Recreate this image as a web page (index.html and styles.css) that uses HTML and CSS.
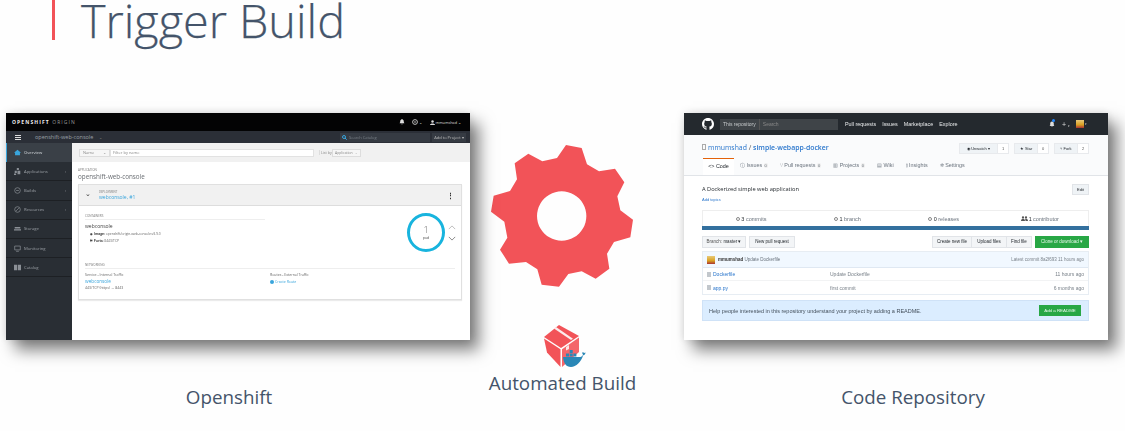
FILE: index.html
```html
<!DOCTYPE html>
<html lang="en">
<head>
<meta charset="utf-8">
<title>Trigger Build</title>
<link rel="stylesheet" href="styles.css">
</head>
<body>
<main class="slide">
  <header class="head">
    <span class="head-bar"></span>
    <h1 class="title">Trigger Build</h1>
  </header>
  <div class="stage">
    <figure class="col col-os">
      <div class="shot os">
        <div class="os-top">
          <span class="os-brand"><b>OPENSHIFT</b> ORIGIN</span>
          <span class="os-top-right">
            <svg class="ic6" viewBox="0 0 10 10"><path fill="#ddd" d="M5 0a1 1 0 0 1 1 1c2 .6 2 3 2 4l1 2H1l1-2c0-1 0-3.400 2-4a1 1 0 0 1 1-1zM4 8h2a1 1 0 0 1-2 0z"/></svg>
            <svg class="ic6 os-help" viewBox="0 0 10 10"><circle cx="5" cy="5" r="4" fill="none" stroke="#ddd" stroke-width="1.400"/><circle cx="5" cy="5" r="1.300" fill="#ddd"/></svg><span class="os-caret">⌄</span>
            <svg class="ic5" viewBox="0 0 10 10"><circle cx="5" cy="3" r="2.500" fill="#ddd"/><path fill="#ddd" d="M0 10c0-4 10-4 10 0z"/></svg>
            <span class="os-user">mmumshad</span><span class="os-caret">⌄</span>
          </span>
        </div>
        <div class="os-nav">
          <span class="os-burger"><i></i><i></i><i></i></span>
          <span class="os-project">openshift-web-console</span><span class="os-project-caret">⌄</span>
          <span class="os-search">
            <svg class="ic5" viewBox="0 0 10 10"><circle cx="4" cy="4" r="3" fill="none" stroke="#39a5dc" stroke-width="2"/><path d="M6 6l3.500 3.500" stroke="#39a5dc" stroke-width="2"/></svg>
            Search Catalog
          </span>
          <span class="os-add">Add to Project ▾</span>
        </div>
        <div class="os-body">
          <nav class="os-side">
            <a class="os-item active"><svg class="ic7" viewBox="0 0 10 10"><path fill="#39a5dc" d="M5 1l5 4.500H8.500V9h-7V5.500H0z"/></svg>Overview</a>
            <a class="os-item"><svg class="ic7" viewBox="0 0 10 10"><path fill="#8b9096" d="M4 0h3v3H4zM1 4h3v3H1zM5 4h4v5H5zM0 8h3v2H0z"/></svg>Applications<span class="os-chev">›</span></a>
            <a class="os-item"><svg class="ic7" viewBox="0 0 10 10"><circle cx="5" cy="5" r="4" fill="none" stroke="#8b9096"/><path d="M3 5h4" stroke="#8b9096"/></svg>Builds<span class="os-chev">›</span></a>
            <a class="os-item"><svg class="ic7" viewBox="0 0 10 10"><circle cx="5" cy="5" r="4" fill="none" stroke="#8b9096"/><path d="M3 7l4-4" stroke="#8b9096"/></svg>Resources<span class="os-chev">›</span></a>
            <a class="os-item"><svg class="ic7" viewBox="0 0 10 10"><path fill="#8b9096" d="M1 3h8v2H1zM0 6h10v2H0z"/></svg>Storage</a>
            <a class="os-item"><svg class="ic7" viewBox="0 0 10 10"><path fill="none" stroke="#8b9096" d="M1 1.500h8v5.500H1z"/><path stroke="#8b9096" d="M3 9h4"/></svg>Monitoring</a>
            <a class="os-item"><svg class="ic7" viewBox="0 0 10 10"><path fill="#8b9096" d="M0 1h4.500v8H0zM5.500 1H10v8H5.500z"/></svg>Catalog</a>
          </nav>
          <section class="os-main">
            <div class="os-filter">
              <span class="os-select os-name">Name<span>⌄</span></span>
              <span class="os-input">Filter by name</span>
              <span class="os-listby">List by</span>
              <span class="os-select os-app">Application<span>⌄</span></span>
            </div>
            <div class="os-content">
              <p class="os-eyebrow">APPLICATION</p>
              <h2 class="os-appname">openshift-web-console</h2>
              <article class="os-card">
                <div class="os-card-head">
                  <span class="os-toggle">⌄</span>
                  <span class="os-deploy"><small>DEPLOYMENT</small><a>webconsole, #1</a></span>
                  <span class="os-kebab">⋮</span>
                </div>
                <div class="os-card-body">
                  <div class="os-split">
                    <div class="os-containers">
                      <p class="os-sec">CONTAINERS</p>
                      <p class="os-cname">webconsole</p>
                      <p class="os-meta"><b>◉ Image:</b> openshift/origin-web-console:v3.9.0</p>
                      <p class="os-meta"><b>⇄ Ports:</b> 8443/TCP</p>
                    </div>
                    <div class="os-pod">
                      <div class="os-ring"><span class="os-count">1</span><span class="os-unit">pod</span></div>
                      <div class="os-scale"><svg viewBox="0 0 10 6"><path d="M1 5l4-4 4 4" fill="none" stroke="#bbb" stroke-width="1.200"/></svg><svg viewBox="0 0 10 6"><path d="M1 1l4 4 4-4" fill="none" stroke="#888" stroke-width="1.200"/></svg></div>
                    </div>
                  </div>
                  <p class="os-sec os-sec-net">NETWORKING</p>
                  <div class="os-net">
                    <div class="os-net-a">
                      <p class="os-net-label">Service - Internal Traffic</p>
                      <a class="os-net-link">webconsole</a>
                      <p class="os-net-label">443/TCP (https) → 8443</p>
                    </div>
                    <div>
                      <p class="os-net-label">Routes - External Traffic</p>
                      <a class="os-route"><span class="os-plus"></span>Create Route</a>
                    </div>
                  </div>
                </div>
              </article>
            </div>
          </section>
        </div>
      </div>
      <figcaption class="cap cap-side cap-os">Openshift</figcaption>
    </figure>

    <figure class="col col-mid">
      <svg class="gear" viewBox="33 14 426 426"><path fill="#f25358" fill-rule="evenodd" d="M258 14L305 23L321 72L357 93L405 85L433 126L412 168L421 210L459 238L451 291L402 305L381 340L388 385L347 415L305 393L265 401L237 439L185 433L172 387L138 365L87 370L60 328L82 292L73 244L33 214L41 166L90 152L111 117L104 69L145 40L187 63L231 53zM245 153a74 74 0 1 0 .1 0z"/></svg>
      <svg class="box" viewBox="0 0 42 42">
        <path fill="#f25358" d="M15 0L0 12l17 11 18-12z"/>
        <path fill="#fdecec" d="M10 3.500l17 11.500 2-1.300L12 2z"/>
        <path fill="#f25358" d="M0 13.500l16.500 10.700V42L3 27.500z"/>
        <path fill="#f4666a" d="M35 12.500V27L18 42V24.200z"/>
        <path fill="#fde3e3" d="M22 22l3-2v4l-3 1.500z"/>
        <path fill="#2a87b6" d="M19 32h16c2 0 3.500-.6 4-2.500-1-1-1-2 0-2.500l1 1 1.500-.5c0 1.500-1 2.500-2.500 3-1.500 6-7 11.500-12 11.500-5 0-7.500-4-8-10z"/>
        <path fill="#2a87b6" d="M22 28.500h3v3h-3zM25.700 28.500h3v3h-3zM29.400 28.500h3v3h-3zM25.700 25h3v3h-3z"/>
      </svg>
      <figcaption class="cap">Automated Build</figcaption>
    </figure>

    <figure class="col col-gh">
      <div class="shot gh">
        <div class="gh-top">
          <svg class="gh-logo" viewBox="0 0 16 16"><path fill="#fff" d="M8 0C3.580 0 0 3.580 0 8c0 3.540 2.290 6.530 5.470 7.590.4.070.55-.17.55-.38 0-.19-.01-.82-.01-1.490-2.010.37-2.530-.49-2.690-.94-.09-.23-.48-.94-.82-1.130-.28-.15-.68-.52-.01-.53.63-.01 1.080.58 1.230.82.72 1.210 1.870.87 2.330.66.07-.52.28-.87.51-1.070-1.780-.2-3.640-.89-3.640-3.950 0-.87.31-1.590.82-2.150-.08-.2-.36-1.020.08-2.120 0 0 .67-.21 2.200.82.64-.18 1.320-.27 2-.27.68 0 1.360.09 2 .27 1.530-1.040 2.200-.82 2.200-.82.44 1.100.16 1.920.08 2.120.51.56.82 1.270.82 2.150 0 3.070-1.870 3.750-3.650 3.950.29.25.54.73.54 1.480 0 1.070-.01 1.930-.01 2.200 0 .21.15.46.55.38A8.013 8.013 0 0 0 16 8c0-4.420-3.580-8-8-8z"/></svg>
          <span class="gh-search"><b>This repository</b><i>Search</i></span>
          <a class="gh-link">Pull requests</a><a class="gh-link">Issues</a><a class="gh-link">Marketplace</a><a class="gh-link">Explore</a>
          <span class="gh-top-right">
            <span class="gh-bell"><svg viewBox="0 0 10 12"><path fill="#ddd" d="M5 2a3 3 0 0 1 3 3v3l1 1.500H1L2 8V5a3 3 0 0 1 3-3zM4 10h2v1H4z"/></svg><i></i></span>
            <span class="gh-plus">+ <small>▾</small></span>
            <span class="gh-avatar"></span><small class="gh-caret">▾</small>
          </span>
        </div>
        <div class="gh-sub">
          <div class="gh-repo-row">
            <h2 class="gh-repo"><span class="gh-book"></span><a>mmumshad</a> / <a><b>simple-webapp-docker</b></a></h2>
            <div class="gh-actions">
              <span class="gh-btn-pair"><span class="gh-btn gh-w37">◉ Unwatch ▾</span><span class="gh-num">1</span></span>
              <span class="gh-btn-pair"><span class="gh-btn gh-w22">★ Star</span><span class="gh-num">0</span></span>
              <span class="gh-btn-pair"><span class="gh-btn gh-w22">⑂ Fork</span><span class="gh-num">2</span></span>
            </div>
          </div>
          <div class="gh-tabs">
            <span class="gh-tab current">&lt;&gt; Code</span>
            <span class="gh-tab">ⓘ Issues <em>0</em></span>
            <span class="gh-tab">⑂ Pull requests <em>0</em></span>
            <span class="gh-tab">▥ Projects <em>0</em></span>
            <span class="gh-tab">▤ Wiki</span>
            <span class="gh-tab">⫾ Insights</span>
            <span class="gh-tab">✲ Settings</span>
          </div>
        </div>
        <div class="gh-main">
          <div class="gh-desc-row">
            <div>
              <p class="gh-desc">A Dockerized simple web application</p>
              <a class="gh-topics">Add topics</a>
            </div>
            <span class="gh-edit">Edit</span>
          </div>
          <div class="gh-stats">
            <span><i class="gh-stat-ico"></i> <b>3</b> commits</span>
            <span><i class="gh-stat-ico"></i> <b>1</b> branch</span>
            <span><i class="gh-stat-ico"></i> <b>0</b> releases</span>
            <span class="gh-people"><svg class="gh-people-ico" viewBox="0 0 14 10"><circle cx="4" cy="3" r="2.300" fill="#555"/><circle cx="10" cy="3" r="2.300" fill="#555"/><path fill="#555" d="M0 10c0-6 8-6 8 0zM9 10c0-2-.5-3-1-4 2.500-1.500 6 0 6 4z"/></svg><b>1</b> contributor</span>
          </div>
          <div class="gh-lang"></div>
          <div class="gh-bar">
            <span class="gh-b gh-b-branch">Branch: <b>master ▾</b></span>
            <span class="gh-b gh-b-new">New pull request</span>
            <span class="gh-group">
              <span class="gh-b gh-w40">Create new file</span><span class="gh-b gh-w35">Upload files</span><span class="gh-b gh-w25">Find file</span>
            </span>
            <span class="gh-clone">Clone or download ▾</span>
          </div>
          <div class="gh-files">
            <div class="gh-commit">
              <span class="gh-mini"></span><b>mmumshad</b>&nbsp;<span class="gh-soft">Update Dockerfile</span>
              <span class="gh-latest">Latest commit 8a2f693 11 hours ago</span>
            </div>
            <div class="gh-file"><span class="gh-name"><i class="gh-fi"></i><a>Dockerfile</a></span><span class="gh-msg">Update Dockerfile</span><span class="gh-age">11 hours ago</span></div>
            <div class="gh-file"><span class="gh-name"><i class="gh-fi"></i><a>app.py</a></span><span class="gh-msg">first commit</span><span class="gh-age">6 months ago</span></div>
          </div>
          <div class="gh-help">
            <span>Help people interested in this repository understand your project by adding a README.</span>
            <span class="gh-readme">Add a README</span>
          </div>
        </div>
      </div>
      <figcaption class="cap cap-side cap-gh">Code Repository</figcaption>
    </figure>
  </div>
</main>
</body>
</html>
```
FILE: styles.css
```css
* { box-sizing: border-box; }
html, body { margin: 0; padding: 0; background: #fefefe; }
p, h1, h2, figure { margin: 0; padding: 0; font-weight: 400; }
a { color: inherit; }
svg { display: block; flex: none; }

.slide { width: 1125px; height: 431px; overflow: hidden; background: #fefefe; font-family: "Open Sans", sans-serif; }

.head { display: flex; height: 113px; padding-left: 52px; align-items: flex-start; }
.head-bar { width: 3px; height: 40px; background: #f25358; }
.title { margin: 0 0 0 26px; font-family: "Open Sans", sans-serif; font-weight: 300; font-size: 46.800px; line-height: 40px; color: #44546a; white-space: nowrap; -webkit-text-stroke: .25px #44546a; }

.stage { display: flex; padding-left: 6px; align-items: flex-start; }
.col { display: flex; flex-direction: column; align-items: center; }
.col-os { width: 464px; }
.col-mid { width: 147px; margin-left: 19px; padding-top: 32px; }
.col-gh { width: 424px; margin-left: 48px; }

.shot { width: 100%; height: 227px; overflow: hidden; filter: blur(.5px); box-shadow: 9px 10px 15px rgba(0,0,0,.5), 0 0 9px rgba(0,0,0,.12); }
.cap { font-size: 18.800px; line-height: 24px; color: #44546a; white-space: nowrap; }
.cap-side { margin-top: 45px; }
.cap-os { margin-right: 18px; }
.cap-gh { margin-left: 34px; }

.gear { width: 142px; height: 142px; margin-left: -2px; }
.box { width: 42px; height: 42px; margin: 38px 0 0 4px; }
.col-mid .cap { margin-top: 4px; }

/* OpenShift */
.os { display: flex; flex-direction: column; background: #fff; font-size: 4px; color: #666; }
.os-top { height: 18px; flex: none; background: #030304; display: flex; align-items: center; padding: 0 9px 0 6px; color: #ddd; }
.os-brand { font-size: 5px; letter-spacing: 1.100px; color: #999; }
.os-brand b { color: #eee; }
.os-top-right { margin-left: auto; display: flex; align-items: center; }
.os-help { margin-left: 7px; }
.os-caret { font-size: 4px; margin: 0 8px 0 1px; }
.os-caret:last-child { margin-right: 0; }
.os-user { margin-left: 1px; font-size: 3.800px; }
.ic6 { width: 6px; height: 6px; }
.ic5 { width: 5px; height: 5px; }
.ic7 { width: 7px; height: 7px; margin-right: 3px; }

.os-nav { height: 12px; flex: none; background: #2b2f37; display: flex; align-items: center; padding: 0 4px 0 9px; color: #aab; }
.os-burger { width: 6px; display: flex; flex-direction: column; gap: 1px; }
.os-burger i { height: 1px; background: #ddd; }
.os-project { margin-left: 14px; font-size: 5.500px; color: #9aa0a6; }
.os-project-caret { margin-left: 6px; color: #888; }
.os-search { margin-left: auto; width: 90px; height: 9px; background: #363b43; display: flex; align-items: center; gap: 2px; padding-left: 2px; color: #7a8088; }
.os-add { margin-left: 2px; width: 34px; height: 9px; line-height: 9px; text-align: center; background: #363b43; color: #bbb; }

.os-body { flex: 1; display: flex; min-height: 0; }
.os-side { width: 66px; flex: none; background: #292e34; display: flex; flex-direction: column; }
.os-item { height: 19.200px; display: flex; align-items: center; padding-left: 8px; color: #9ba0a6; border-bottom: 1px solid #1d2024; font-size: 4.200px; }
.os-item.active { background: #3a4047; border-left: 1px solid #39a5dc; padding-left: 7px; color: #d6dade; border-bottom: 0; }
.os-chev { margin-left: auto; margin-right: 6px; }

.os-main { flex: 1; min-width: 0; display: flex; flex-direction: column; }
.os-filter { height: 19px; flex: none; background: #f1f1f1; display: flex; align-items: center; padding-left: 7px; color: #888; }
.os-select { height: 8px; display: flex; align-items: center; justify-content: space-between; padding: 0 3px; background: #f6f6f6; border: 1px solid #ddd; }
.os-name { width: 31px; }
.os-input { width: 204px; height: 8px; line-height: 6px; padding-left: 2px; background: #fff; border: 1px solid #e2e2e2; }
.os-listby { margin-left: 5px; width: 13px; border-left: 1px solid #ddd; padding-left: 1px; font-size: 3.600px; white-space: nowrap; }
.os-app { width: 29px; font-size: 3.400px; padding: 0 2px; }

.os-content { padding: 6px 8px 0 6px; }
.os-eyebrow { font-size: 3px; line-height: 4px; color: #777; }
.os-appname { font-size: 6.300px; line-height: 9px; color: #6a6e73; }
.os-card { margin-top: 3px; height: 116px; border: 1px solid #e0e0e0; box-shadow: 0 1px 1px rgba(0,0,0,.08); }
.os-card-head { height: 21px; background: #f1f1f1; border-bottom: 1px solid #ddd; display: flex; align-items: center; padding: 0 7px 0 6px; }
.os-toggle { width: 14px; font-size: 7px; line-height: 7px; color: #333; margin-top: -3px; }
.os-deploy { display: flex; flex-direction: column; }
.os-deploy small { font-size: 2.800px; line-height: 4px; color: #777; }
.os-deploy a { font-size: 5px; line-height: 6px; color: #39a5dc; }
.os-kebab { margin-left: auto; font-size: 7px; font-weight: 700; color: #333; }
.os-card-body { padding: 8px 6px 0 6px; }
.os-split { display: flex; height: 50px; }
.os-containers { width: 180px; flex: none; }
.os-sec { font-size: 3px; line-height: 4px; color: #777; border-bottom: 1px solid #eee; padding-bottom: 1px; }
.os-cname { font-size: 5px; line-height: 7px; margin-top: 3px; color: #444; }
.os-meta { font-size: 3.300px; line-height: 7px; padding-left: 5px; color: #666; white-space: nowrap; }
.os-meta b { color: #444; }
.os-pod { margin-left: auto; display: flex; align-items: center; gap: 3px; margin-top: -1px; margin-right: -1px; height: 39px; }
.os-ring { width: 38px; height: 39px; border-radius: 50%; border: 3px solid #18b4de; display: flex; flex-direction: column; align-items: center; justify-content: center; }
.os-count { font-size: 9px; line-height: 10px; color: #666; font-weight: 300; }
.os-unit { font-size: 3.500px; line-height: 5px; color: #444; }
.os-scale { width: 8px; display: flex; flex-direction: column; gap: 6px; }
.os-scale svg { width: 8px; height: 5px; }
.os-sec-net { margin-top: -1px; }
.os-net { display: flex; margin-top: 3px; }
.os-net-a { width: 185px; flex: none; }
.os-net-label { font-size: 3.500px; line-height: 6px; color: #666; white-space: nowrap; }
.os-net-link { display: block; font-size: 4.700px; line-height: 7px; color: #39a5dc; }
.os-route { display: flex; align-items: center; gap: 1px; font-size: 3.500px; line-height: 7px; color: #39a5dc; }
.os-plus { width: 4px; height: 4px; border-radius: 50%; background: #39a5dc; }

/* GitHub */
.gh { display: flex; flex-direction: column; background: #fff; font-family: "Liberation Sans", sans-serif; font-size: 4.500px; color: #555; }
.gh-top { height: 22px; flex: none; background: #24292e; display: flex; align-items: center; padding: 0 21px 0 18px; color: #ddd; }
.gh-logo { width: 12px; height: 12px; }
.gh-search { margin-left: 6px; width: 118px; height: 11px; background: #3f4448; display: flex; align-items: center; padding-left: 3px; color: #c5c8ca; font-size: 5px; }
.gh-search b { font-weight: 400; padding-right: 3px; border-right: 1px solid #555; line-height: 11px; }
.gh-search i { font-style: normal; color: #888; padding-left: 3px; }
.gh-link { margin-left: 6px; color: #e8eaeb; font-size: 5.400px; white-space: nowrap; }
.gh-link:first-of-type { margin-left: 7px; }
.gh-top-right { margin-left: auto; display: flex; align-items: center; }
.gh-bell { position: relative; width: 6px; height: 8px; }
.gh-bell svg { width: 6px; height: 8px; }
.gh-bell i { position: absolute; top: -1px; left: 3px; width: 3px; height: 3px; border-radius: 50%; background: #2188ff; }
.gh-plus { margin-left: 7px; font-size: 7px; color: #ddd; }
.gh-plus small { font-size: 3px; }
.gh-avatar { margin-left: 6px; width: 8px; height: 8px; background: linear-gradient(#e8c97a, #d9a020 60%, #a33 100%); }
.gh-caret { font-size: 3px; margin-left: 1px; }

.gh-sub { height: 41px; flex: none; background: #fafbfc; border-bottom: 1px solid #e1e4e8; padding: 8px 19px 0 18px; display: flex; flex-direction: column; }
.gh-repo-row { display: flex; align-items: center; height: 10px; }
.gh-repo { font-size: 6.900px; line-height: 10px; color: #555; font-family: "Open Sans", sans-serif; white-space: nowrap; }
.gh-repo a { color: #2a76cc; }
.gh-repo b { font-weight: 600; }
.gh-book { display: inline-block; width: 4px; height: 6px; border: 1px solid #aaa; margin-right: 2px; }
.gh-actions { margin-left: auto; display: flex; gap: 5px; }
.gh-btn-pair { display: flex; height: 11px; border: 1px solid #e8eaed; line-height: 9px; font-size: 4px; white-space: nowrap; }
.gh-btn { background: #eff3f6; color: #24292e; text-align: center; }
.gh-w37 { width: 37px; }
.gh-w22 { width: 22px; }
.gh-num { width: 11px; text-align: center; background: #fff; border-left: 1px solid #e8eaed; }
.gh-tabs { margin-top: 5px; display: flex; height: 17px; margin-bottom: -1px; }
.gh-tab { padding: 4px 0 0 0; font-size: 5.400px; color: #6a737d; white-space: nowrap; margin-right: 12px; }
.gh-tab em { font-style: normal; background: #eee; border-radius: 2px; padding: 0 1px; font-size: 4px; }
.gh-tab.current { margin-left: 1px; background: #fff; border-top: 1px solid #e36209; color: #24292e; width: 31px; margin-right: 6px; text-align: center; }

.gh-main { flex: 1; padding: 8px 19px 0 18px; }
.gh-desc-row { display: flex; align-items: flex-start; height: 26px; }
.gh-desc { font-family: "Open Sans", sans-serif; font-size: 5.700px; line-height: 10px; color: #24292e; }
.gh-topics { display: block; font-size: 4px; line-height: 12px; color: #2a76cc; }
.gh-edit { margin-left: auto; width: 17px; height: 11px; line-height: 9px; text-align: center; border: 1px solid #e1e4e8; background: #eff3f6; font-size: 4px; color: #24292e; }
.gh-stats { height: 16px; border: 1px solid #eee; border-bottom: 0; display: grid; grid-template-columns: repeat(4, 1fr); align-items: center; text-align: center; font-size: 5.500px; color: #6a737d; }
.gh-stats b { color: #24292e; font-weight: 400; }
.gh-stat-ico { display: inline-block; width: 4px; height: 4px; border: 1px solid #888; border-radius: 50%; }
.gh-people { display: flex; align-items: center; justify-content: center; gap: 1px; }
.gh-people-ico { width: 7px; height: 5px; }
.gh-lang { height: 4px; background: #33709e; }
.gh-bar { margin-top: 6px; height: 12px; display: flex; font-size: 4.500px; color: #24292e; }
.gh-b { height: 12px; line-height: 10px; padding: 0; border: 1px solid #e1e4e8; background: #f3f5f7; white-space: nowrap; text-align: center; }
.gh-b-branch { width: 44px; font-weight: 400; color: #555; }
.gh-b-branch b { font-weight: 400; color: #24292e; }
.gh-b-new { margin-left: 3px; width: 46px; }
.gh-w40 { width: 40px; }
.gh-w35 { width: 35px; }
.gh-w25 { width: 25px; }
.gh-group { margin-left: auto; display: flex; }
.gh-group .gh-b + .gh-b { border-left: 0; }
.gh-clone { margin-left: 3px; width: 54px; height: 12px; line-height: 12px; text-align: center; background: #28a745; color: #e8f8ec; white-space: nowrap; }
.gh-files { margin-top: 3px; border: 1px solid #e7edf3; }
.gh-commit { height: 16px; background: #f1f8ff; border-bottom: 1px solid #dfe8f2; display: flex; align-items: center; padding: 0 4px; font-size: 4.500px; color: #444; }
.gh-commit b { color: #333; }
.gh-mini { width: 8px; height: 8px; margin-right: 3px; background: linear-gradient(#e8c97a, #d9a020 60%, #a33 100%); }
.gh-soft { color: #6a737d; }
.gh-latest { margin-left: auto; color: #7a828a; }
.gh-file { height: 13px; display: grid; grid-template-columns: 123px 1fr auto; align-items: center; padding: 0 4px; font-size: 5px; color: #7a828a; border-bottom: 1px solid #f2f3f4; }
.gh-file:last-child { border-bottom: 0; }
.gh-name { display: flex; align-items: center; gap: 2px; color: #2a76cc; }
.gh-fi { width: 4px; height: 5px; background: #c2c7cc; }
.gh-help { margin-top: 5px; height: 21px; background: #dbedff; border: 1px solid #cfe2f7; display: flex; align-items: center; justify-content: space-between; padding: 0 7px 0 6px; font-size: 5.500px; color: #44505c; white-space: nowrap; }
.gh-readme { width: 42px; height: 11px; line-height: 11px; text-align: center; background: #28a745; color: #e8f8ec; font-size: 4.400px; }
```
